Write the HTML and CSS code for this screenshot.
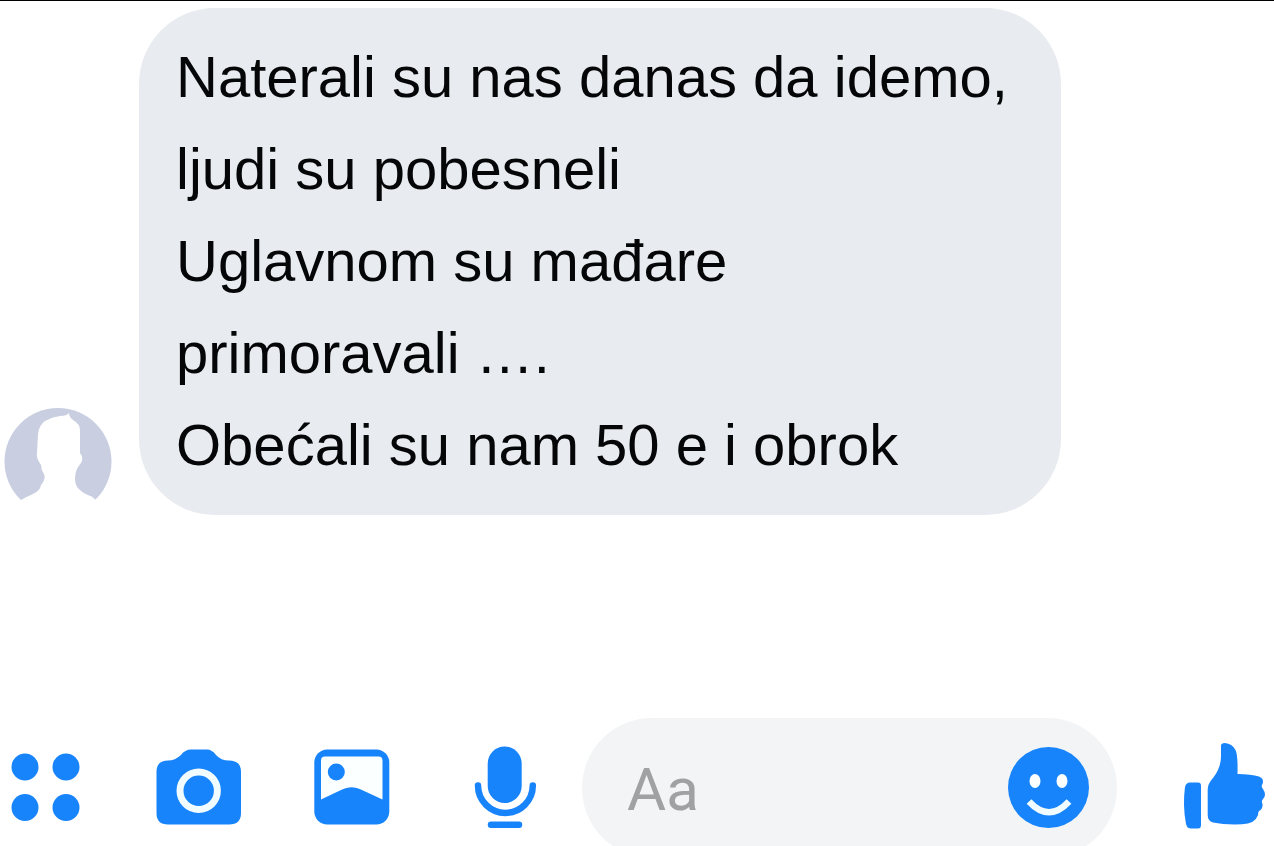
FILE: index.html
```
<!DOCTYPE html>
<html lang="sr-Latn">
<head>
    <meta charset="UTF-8">
    <meta name="viewport" content="width=device-width, initial-scale=1.0">
    <title>Chat</title>
    <link rel="stylesheet" href="styles.css">
</head>
<body>
    <main class="chat">
        <div class="message">
            <svg class="avatar" viewBox="0 0 108 108" aria-hidden="true">
                <circle cx="54" cy="54.5" r="53.5" fill="#c9cfe1"/>
                <path fill="#fff" d="M0 108 L17 93 Q22 90 29 87 Q36 84 37 78 Q42 72 40 67 Q37 63 37 58 Q32 51 33 46 L34 27 Q35 18 41 14 Q48 10 56 9 Q63 9 65 6 Q65 10 69 13 Q76 17 76 23 L76 46 Q80 51 77 56 Q72 62 71.5 67 Q70 75 73 80 Q77 85 84 88 Q88 89 92 93 L108 108 Z"/>
            </svg>
            <div class="bubble">
                <p>Naterali su nas danas da idemo,<br>ljudi su pobesneli</p>
                <p>Uglavnom su mađare<br>primoravali ….</p>
                <p>Obećali su nam 50 e i obrok</p>
            </div>
        </div>
    </main>

    <form class="composer">
        <div class="tools">
            <button type="button" class="tool-btn" aria-label="More">
                <svg viewBox="0 0 92 92">
                    <circle cx="25" cy="25" r="13.5"/>
                    <circle cx="66" cy="25" r="13.5"/>
                    <circle cx="25" cy="65.5" r="13.5"/>
                    <circle cx="66" cy="65.5" r="13.5"/>
                </svg>
            </button>
            <button type="button" class="tool-btn" aria-label="Camera">
                <svg viewBox="0 0 92 92">
                    <path d="M15 18.5 Q22 18.5 28 13 Q32 7.5 38 7.5 H54 Q59 7.5 63 13 Q68 18.5 76 18.5 Q88 18.5 88 30 V71 Q88 82.5 76 82.5 H15 Q3.5 82.5 3.5 71 V30 Q3.5 18.5 15 18.5 Z"/>
                    <circle class="cutout-line" cx="45.7" cy="48.7" r="18.7" stroke-width="7"/>
                </svg>
            </button>
            <button type="button" class="tool-btn" aria-label="Photos">
                <svg viewBox="0 0 92 92">
                    <rect x="8.3" y="7.5" width="75" height="75" rx="13"/>
                    <path class="cutout" d="M19 14.5 H72.5 Q76.5 14.5 76.5 18.5 V57.5 L57 48.5 Q50 45.2 45.7 45.2 Q41 45.2 34 48.5 L15 57.5 V18.5 Q15 14.5 19 14.5 Z"/>
                    <circle cx="30.3" cy="30" r="8.5"/>
                </svg>
            </button>
            <button type="button" class="tool-btn" aria-label="Voice message">
                <svg viewBox="0 0 92 92">
                    <rect x="28.7" y="4.5" width="34" height="56.5" rx="17"/>
                    <path class="line" d="M19 43.5 A27.4 27.4 0 0 0 73.8 43.5"/>
                    <path class="line" d="M32 82.7 H60"/>
                </svg>
            </button>
        </div>

        <div class="text-field">
            <input type="text" placeholder="Aa" aria-label="Message">
            <button type="button" class="emoji-btn" aria-label="Emoji">
                <svg viewBox="0 0 82 82">
                    <circle cx="40.5" cy="40.5" r="40.5"/>
                    <ellipse class="cutout" cx="27" cy="34" rx="5.5" ry="7"/>
                    <ellipse class="cutout" cx="54" cy="34" rx="5.5" ry="7"/>
                    <path class="cutout-line" d="M21 54.5 Q41 76 61 54.5" stroke-width="6.5"/>
                </svg>
            </button>
        </div>

        <button type="button" class="tool-btn" aria-label="Like">
            <svg viewBox="0 0 92 92">
                <path d="M11 40.5 H19 Q22 40.5 22 43.5 V83 Q22 86.5 19 86.5 H12 Q8 86.5 7 82 Q3.5 63 6 45 Q7 40.5 11 40.5 Z"/>
                <path d="M42 3.5 Q42 1 46 1 Q53 1.5 56.5 8 Q59 13 58.5 32 Q72 32 80 34.5 Q86 37 83 43 Q82 45 84 47 Q88 53 84 57 Q82 59 83.5 62 Q84 67 80 69 Q79 70 79 73 Q76 82 63 82.3 Q46 83 34 80.5 Q28.7 79 28.7 73 V47 Q28.7 42 34 36 Q42 26 42 14 Z"/>
            </svg>
        </button>
    </form>
</body>
</html>
```
FILE: styles.css
```
* {
    box-sizing: border-box;
}

/* Body Styling */
body {
    font-family: "Liberation Sans", Arial, sans-serif;
    background-color: #fff;
    color: #050608;
    margin: 0;
    height: 100vh;
    display: flex;
    flex-direction: column;
    overflow: hidden;
    border-top: 1px solid #000;
}

/* Conversation */
.chat {
    flex: 1;
    padding: 7px 213px 0 4px;
}

.message {
    display: flex;
    align-items: flex-end;
    gap: 27px;
}

.avatar {
    width: 108px;
    height: 108px;
    flex-shrink: 0;
}

.bubble {
    flex: 1;
    padding: 23px 24px 24px 37px;
    border-radius: 76px;
    background-color: #e8ebef;
    font-size: 58px;
    line-height: 92px;
}

.bubble p {
    margin: 0;
}

/* Bottom Bar, runs slightly past the bottom of the window */
.composer {
    display: flex;
    align-items: center;
    padding-right: 3px;
    margin-bottom: -12px;
}

.tools {
    display: flex;
    gap: 61px;
}

button {
    padding: 0;
    border: none;
    background: none;
    cursor: pointer;
}

button svg {
    display: block;
    width: 100%;
    height: 100%;
    fill: #1884fc;
}

.tool-btn {
    width: 92px;
    height: 92px;
    flex-shrink: 0;
}

/* Icon Parts */
.line {
    fill: none;
    stroke: #1884fc;
    stroke-width: 6.5;
    stroke-linecap: round;
}

.cutout {
    fill: #fcffff;
}

.cutout-line {
    fill: none;
    stroke: #f0fcff;
}

/* Text Field */
.text-field {
    flex: 1;
    min-width: 0;
    height: 140px;
    margin: 0 62px 0 31px;
    padding: 0 27px 0 45px;
    display: flex;
    align-items: center;
    border-radius: 70px;
    background-color: #f2f4f6;
}

.text-field input {
    flex: 1;
    min-width: 0;
    padding: 2px 0 0;
    border: none;
    outline: none;
    background: none;
    color: #050608;
    font-family: Roboto, sans-serif;
    font-size: 60px;
}

.text-field input::placeholder {
    color: #a0a1a2;
}

.emoji-btn {
    width: 82px;
    height: 82px;
    flex-shrink: 0;
}
```
